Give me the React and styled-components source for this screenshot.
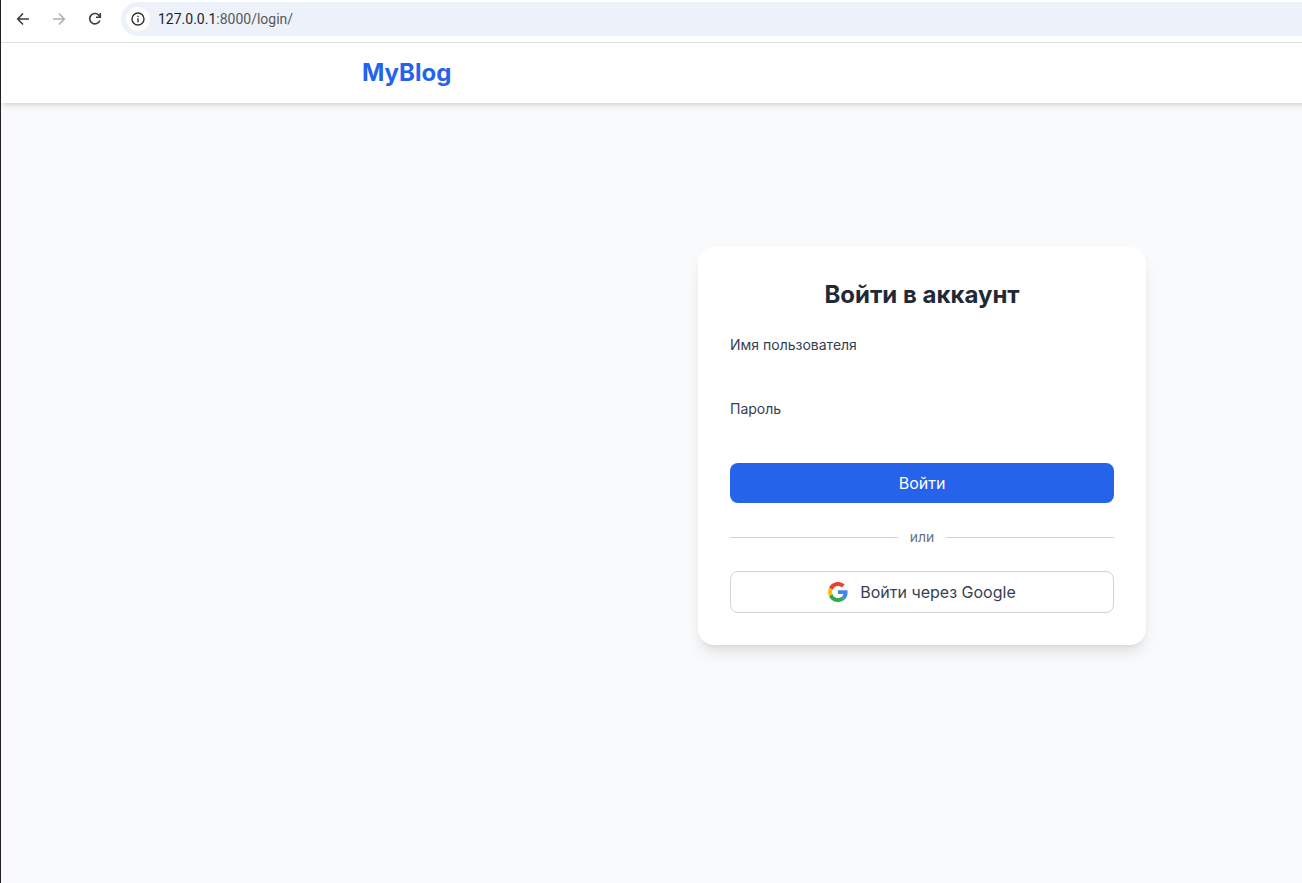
import React from "react";
import styled, { createGlobalStyle } from "styled-components";

const GlobalStyle = createGlobalStyle`
  *, *::before, *::after { box-sizing: border-box; }
  html, body, #root { min-height: 100vh; }
  body {
    margin: 0;
    background: #f9fafb;
    font-family: Inter, "Liberation Sans", sans-serif;
    font-size: 16px;
    line-height: 24px;
    color: #1f2937;
  }
  button, input { font: inherit; color: inherit; }
  h1, p { margin: 0; }
`;

const Window = styled.div`
  display: flex;
  flex-direction: column;
  min-height: 100vh;
  border-left: 1px solid #231f20;
  overflow: hidden;
`;

const Toolbar = styled.div`
  display: flex;
  align-items: center;
  height: 43px;
  padding: 2px 0 6px 4px;
  background: #ffffff;
  border-bottom: 1px solid #dfe0e2;
`;

const ToolButton = styled.button`
  display: flex;
  align-items: center;
  justify-content: center;
  width: 36px;
  height: 34px;
  padding: 0;
  border: 0;
  background: none;
  color: ${(p) => (p.disabled ? "#b0b0b0" : "#3c3c3c")};
`;

const AddressBar = styled.div`
  display: flex;
  align-items: center;
  flex: 1;
  gap: 8px;
  height: 34px;
  margin-left: 8px;
  padding-left: 5px;
  border-radius: 17px 0 0 17px;
  background: #edf1fa;
`;

const SiteInfo = styled.button`
  display: flex;
  align-items: center;
  justify-content: center;
  width: 24px;
  height: 24px;
  padding: 0;
  border: 0;
  border-radius: 12px;
  background: #ffffff;
  color: #303030;
`;

const Url = styled.div`
  flex: 1;
  font-family: Roboto, "Noto Sans", sans-serif;
  font-size: 14px;
  line-height: 20px;
  color: #55585c;
  outline: none;
`;

const Host = styled.span`
  color: #1f1f1f;
`;

/* The site is wider than the window and runs past its right edge. */
const Site = styled.div`
  display: flex;
  flex: 1;
  flex-direction: column;
  width: calc(100% + 541px);
`;

const Header = styled.header`
  background: #ffffff;
  box-shadow: 0 4px 6px -1px rgba(0, 0, 0, 0.1), 0 2px 4px -2px rgba(0, 0, 0, 0.1);
`;

const HeaderInner = styled.div`
  display: flex;
  align-items: center;
  max-width: 1152px;
  height: 60px;
  margin: 0 auto;
  padding: 0 16px;
`;

const Brand = styled.a`
  font-size: 24px;
  line-height: 32px;
  font-weight: 700;
  color: #2563eb;
  text-decoration: none;
`;

const Main = styled.main`
  display: flex;
  justify-content: center;
  padding: 144px 16px 48px;
`;

const Card = styled.section`
  width: 100%;
  max-width: 448px;
  padding: 32px;
  border-radius: 16px;
  background: #ffffff;
  box-shadow: 0 10px 15px -3px rgba(0, 0, 0, 0.1), 0 4px 6px -4px rgba(0, 0, 0, 0.1);
`;

const Title = styled.h1`
  margin-bottom: 24px;
  font-size: 24px;
  line-height: 32px;
  font-weight: 700;
  text-align: center;
`;

const Form = styled.form`
  display: flex;
  flex-direction: column;
  gap: 16px;
`;

const Field = styled.div`
  display: flex;
  flex-direction: column;
  gap: 4px;
`;

const Label = styled.label`
  font-size: 14px;
  line-height: 20px;
  color: #374151;
`;

const TextInput = styled.input`
  width: 100%;
  height: 24px;
  padding: 0;
  border: 0;
  background: transparent;
  outline: none;
`;

const SubmitButton = styled.button`
  padding: 8px 16px;
  border: 0;
  border-radius: 8px;
  background: #2563eb;
  color: #ffffff;
`;

const Divider = styled.div`
  display: flex;
  align-items: center;
  gap: 12px;
  margin: 24px 0;
  font-size: 14px;
  line-height: 20px;
  color: #6b7280;

  &::before,
  &::after {
    content: "";
    flex: 1;
    height: 1px;
    background: #d1d5db;
  }
`;

const GoogleButton = styled.button`
  display: flex;
  align-items: center;
  justify-content: center;
  gap: 12px;
  width: 100%;
  padding: 8px 16px;
  border: 1px solid #d1d5db;
  border-radius: 8px;
  background: #ffffff;
  color: #374151;
`;

const Stroke = ({ children, size = 16, width = 2 }) => (
  <svg width={size} height={size} viewBox="0 0 16 16" fill="none" stroke="currentColor" strokeWidth={width} aria-hidden="true">
    {children}
  </svg>
);

const BackIcon = () => (
  <Stroke width={1.6}>
    <path d="M14 8H3M8 2.5 2.7 8 8 13.5" />
  </Stroke>
);

const ForwardIcon = () => (
  <Stroke width={1.6}>
    <path d="M2 8h11M8 2.5 13.3 8 8 13.5" />
  </Stroke>
);

const ReloadIcon = () => (
  <Stroke width={1.6}>
    <path d="M12.8 9.4A5.2 5.2 0 1 1 12.2 4.8L13.3 6.2" />
    <path d="M13.3 2v4.3H9" />
  </Stroke>
);

const InfoIcon = () => (
  <Stroke width={1.4}>
    <circle cx="8" cy="8" r="6" />
    <path d="M8 7.2v4M8 4.7v1.4" />
  </Stroke>
);

const GoogleIcon = () => (
  <svg width="20" height="20" viewBox="0 0 48 48" aria-hidden="true">
    <path fill="#EA4335" d="M24 9.5c3.54 0 6.71 1.22 9.21 3.6l6.85-6.85C35.9 2.38 30.47 0 24 0 14.62 0 6.51 5.38 2.56 13.22l7.98 6.19C12.43 13.72 17.74 9.5 24 9.5z" />
    <path fill="#4285F4" d="M46.98 24.55c0-1.57-.15-3.09-.38-4.55H24v9.02h12.94c-.58 2.96-2.26 5.48-4.78 7.18l7.73 6c4.51-4.18 7.09-10.36 7.09-17.65z" />
    <path fill="#FBBC05" d="M10.53 28.59c-.48-1.45-.76-2.99-.76-4.59s.27-3.14.76-4.59l-7.98-6.19C.92 16.46 0 20.12 0 24c0 3.88.92 7.54 2.56 10.78l7.97-6.19z" />
    <path fill="#34A853" d="M24 48c6.48 0 11.93-2.13 15.89-5.81l-7.73-6c-2.15 1.45-4.92 2.3-8.16 2.3-6.26 0-11.57-4.22-13.47-9.91l-7.98 6.19C6.51 42.62 14.62 48 24 48z" />
  </svg>
);

export default function App() {
  return (
    <>
      <GlobalStyle />
      <Window>
        <Toolbar>
          <ToolButton type="button" aria-label="Назад"><BackIcon /></ToolButton>
          <ToolButton type="button" aria-label="Вперёд" disabled><ForwardIcon /></ToolButton>
          <ToolButton type="button" aria-label="Обновить"><ReloadIcon /></ToolButton>
          <AddressBar>
            <SiteInfo type="button" aria-label="Сведения о сайте"><InfoIcon /></SiteInfo>
            <Url role="textbox" aria-label="Адрес" contentEditable suppressContentEditableWarning spellCheck={false}>
              <Host>127.0.0.1</Host>:8000/login/
            </Url>
          </AddressBar>
        </Toolbar>
        <Site>
          <Header>
            <HeaderInner>
              <Brand href="/">MyBlog</Brand>
            </HeaderInner>
          </Header>
          <Main>
            <Card>
              <Title>Войти в аккаунт</Title>
              <Form onSubmit={(e) => e.preventDefault()}>
                <Field>
                  <Label htmlFor="username">Имя пользователя</Label>
                  <TextInput id="username" name="username" type="text" />
                </Field>
                <Field>
                  <Label htmlFor="password">Пароль</Label>
                  <TextInput id="password" name="password" type="password" />
                </Field>
                <SubmitButton type="submit">Войти</SubmitButton>
              </Form>
              <Divider>или</Divider>
              <GoogleButton type="button">
                <GoogleIcon />
                Войти через Google
              </GoogleButton>
            </Card>
          </Main>
        </Site>
      </Window>
    </>
  );
}
